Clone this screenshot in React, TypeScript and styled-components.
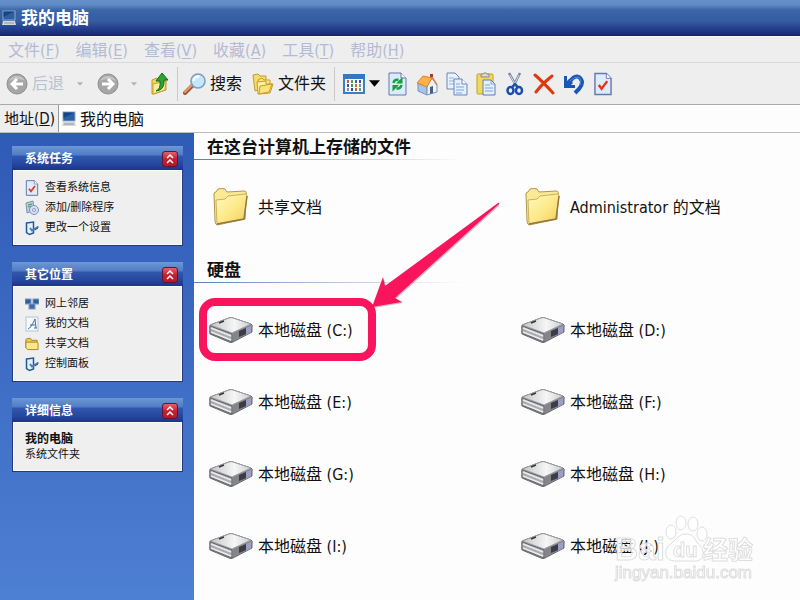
import React, { useState } from "react";
import styled, { createGlobalStyle, css } from "styled-components";

const GlobalStyle = createGlobalStyle`
  * { box-sizing: border-box; }
  body {
    margin: 0;
    color: #111;
    background: #fdfdfd;
    font-family: "DejaVu Sans Condensed", "Noto Sans CJK SC", sans-serif;
    font-size: 16px;
    line-height: 20px;
  }
  button, input { font: inherit; color: inherit; }
`;

/* ---------- window chrome ---------- */

const Window = styled.div`
  display: flex;
  flex-direction: column;
  min-height: 100vh;
`;

const TitleBar = styled.header`
  display: flex;
  align-items: center;
  gap: 5px;
  height: 36px;
  padding-left: 2px;
  color: #fff;
  background: linear-gradient(#6590c8 0, #5f8ac4 5px, #3b65a8 10px, #355da1 21px, #24418f 28px, #1d2c7c 34px, #191f66 100%);
`;

const Title = styled.h1`
  margin: 0;
  font-size: 17px;
  font-weight: 700;
  line-height: 24px;
`;

const MenuBar = styled.nav`
  display: flex;
  align-items: center;
  gap: 16px;
  height: 27px;
  padding: 2px 0 0 8px;
  background: #eeeeee;
  border-top: 1px solid #fafafa;
  border-bottom: 1px solid #d9d9de;
`;

const plainButton = css`
  display: flex;
  align-items: center;
  padding: 0;
  border: 0;
  background: none;
  white-space: nowrap;
`;

const MenuButton = styled.button`
  ${plainButton}
  color: #b3bbd3;
  u { text-underline-offset: 2px; }
`;

const ToolBar = styled.div`
  display: flex;
  align-items: center;
  height: 42px;
  padding-left: 6px;
  background: #eeeeee;
  border-bottom: 1px solid #a9a9a9;
`;

const ToolGroup = styled.div`
  display: flex;
  flex: none;
  gap: 10px;
  padding-right: 3px;
`;

const ToolButton = styled.button<{ $width?: number }>`
  ${plainButton}
  flex: none;
  gap: 4px;
  height: 30px;
  justify-content: ${p => (p.$width ? "center" : "flex-start")};
  width: ${p => (p.$width ? `${p.$width}px` : "auto")};
  &:disabled { color: #b9c2d0; }
`;

const Separator = styled.span`
  flex: none;
  width: 1px;
  height: 34px;
  margin: 0 5px;
  background: #c9c9cc;
`;

const AddressBar = styled.label`
  display: flex;
  align-items: stretch;
  height: 28px;
  background: #eeeeee;
  border-bottom: 1px solid #bcbcbc;
`;

const AddressLabel = styled.span`
  display: flex;
  align-items: center;
  width: 58px;
  padding-left: 4px;
  font-size: 15px;
  white-space: nowrap;
`;

const AddressField = styled.span`
  display: flex;
  flex: 1;
  align-items: center;
  gap: 4px;
  padding-left: 3px;
  background: #fdfdfd;
  border-left: 1px solid #9a9a9a;
`;

const AddressInput = styled.input`
  flex: 1;
  min-width: 0;
  padding: 2px 0 0;
  border: 0;
  outline: 0;
  background: none;
`;

const Body = styled.div`
  display: flex;
  flex: 1;
`;

/* ---------- side bar ---------- */

const SideBar = styled.aside`
  display: flex;
  flex: none;
  flex-direction: column;
  gap: 16px;
  width: 194px;
  padding: 13px 11px 16px 12px;
  background: linear-gradient(#2f5ab6, #4d7fd3);
`;

const PanelHeader = styled.div`
  display: flex;
  align-items: center;
  justify-content: space-between;
  height: 24px;
  padding: 1px 5px 0 13px;
  background: linear-gradient(#6d97d4 0, #4f7cc6 9px, #3158ab 10px, #2647a0 18px, #1f318e 100%);
`;

const PanelTitle = styled.h2`
  margin: 0;
  color: #fff;
  font-size: 12px;
  line-height: 16px;
`;

const Collapse = styled.button`
  ${plainButton}
  justify-content: center;
  width: 16px;
  height: 16px;
  border: 1px solid #5d1530;
  border-radius: 3px;
  background: linear-gradient(#e4606c, #c4212f 50%, #b8182a);
`;

const PanelBody = styled.div`
  padding: 8px 12px 7px;
  border: 1px solid #26397f;
  border-top: 0;
  box-shadow: inset 0 0 0 1px #fafafa;
  background: #efefef;
  font-size: 11px;
`;

const TaskLink = styled.a`
  display: flex;
  align-items: center;
  gap: 6px;
  height: 20px;
  color: #111;
  text-decoration: none;
  line-height: 16px;
`;

const Details = styled.p`
  margin: 2px 0;
  line-height: 15px;
  strong { display: block; font-size: 12px; }
`;

/* ---------- content ---------- */

const Content = styled.main`
  flex: 1;
  min-width: 0;
  background: #fdfdfd;
`;

const SectionTitle = styled.h2`
  height: 27px;
  margin: 0;
  padding: 3px 0 0 13px;
  font-size: 17px;
  line-height: 22px;
  background: linear-gradient(90deg, #5b7fae, #a9bcd6 120px, #fdfdfd 270px) left bottom / 100% 1px no-repeat;
`;

const TileGrid = styled.div`
  display: grid;
  grid-template-columns: repeat(auto-fill, 250px);
  grid-auto-rows: 72px;
  column-gap: 62px;
  padding: 11px 0 13px 15px;
`;

const TileCell = styled.div`
  position: relative;
  display: flex;
`;

const Tile = styled.button`
  ${plainButton}
  flex: 1;
  gap: 5px;
`;

const TileName = styled.span`
  padding-top: 2px;
`;

const TileIcon = styled.span`
  display: flex;
  flex: none;
  justify-content: center;
  width: 44px;
`;

const Highlight = styled.span`
  position: absolute;
  top: 4px;
  left: -10px;
  width: 177px;
  height: 63px;
  border: 8px solid #f9155d;
  border-radius: 16px;
  pointer-events: none;
`;

const ArrowSvg = styled.svg`
  position: absolute;
  top: -93px;
  left: 161px;
  z-index: 1;
  pointer-events: none;
`;

const WatermarkSvg = styled.svg`
  position: fixed;
  right: 40px;
  bottom: 14px;
  pointer-events: none;
`;

/* ---------- icons ---------- */

const ComputerIcon = () => (
  <svg width="14" height="16" viewBox="0 0 14 16">
    <rect x="1" y="1" width="12" height="9" fill="#2b5fa6" stroke="#8fa9c9" />
    <path d="M1.5 1.5h11L1.5 7z" fill="#17467f" />
    <path d="M1 11h12l1 4H0z" fill="#d5d6d8" />
    <path d="M2 13h10" stroke="#8e98a6" />
  </svg>
);

const RoundArrow = ({ forward = false }: { forward?: boolean }) => (
  <svg width="22" height="22" viewBox="0 0 22 22">
    <circle cx="11" cy="11" r="10" fill="#a6a6a6" stroke="#8f8f8f" />
    <path d="M3 8a9 9 0 0 1 16 0q-8-4-16 0z" fill="#c4c4c4" />
    <path
      d={forward ? "M5 11h11M11 6l5 5-5 5" : "M17 11H6M11 6l-5 5 5 5"}
      fill="none" stroke="#fff" strokeWidth="3"
    />
  </svg>
);

const Caret = ({ dark = false }: { dark?: boolean }) => (
  <svg width={dark ? 11 : 6} height={dark ? 7 : 4} viewBox="0 0 10 6">
    <path d="M0 0h10L5 6z" fill={dark ? "#000" : "#b4b4b8"} />
  </svg>
);

const UpFolderIcon = () => (
  <svg width="20" height="24" viewBox="0 0 20 24">
    <path d="M2 8l5-2 2 2h7v10L4 22H2z" fill="#f1d564" stroke="#c69a2b" />
    <path d="M3 12l13-3-1 9-12 4z" fill="#fbec9a" stroke="#c9a136" />
    <path d="M6 19q5-2 4-10H6l6-8 6 7h-4q1 10-8 11z" fill="#2da533" stroke="#0f6a1d" />
  </svg>
);

const SearchIcon = () => (
  <svg width="23" height="24" viewBox="0 0 23 24">
    <path d="M2 21l8-8" stroke="#9a5a35" strokeWidth="4" strokeLinecap="round" />
    <path d="M2 20l7-7" stroke="#e79a62" strokeWidth="2" strokeLinecap="round" />
    <circle cx="15" cy="9" r="7" fill="#c4e8fb" stroke="#7f9dbf" strokeWidth="1.6" />
    <path d="M10.5 9a5 5 0 0 1 6-4.5" fill="none" stroke="#fff" strokeWidth="2" />
  </svg>
);

const FoldersIcon = () => (
  <svg width="22" height="22" viewBox="0 0 22 22" stroke="#c79b2b" strokeLinejoin="round">
    <path d="M1 2l5-1 2 2h6v11L3 18z" fill="#f7db6a" />
    <path d="M6 7l4-2 2 2h6v10L8 20z" fill="#fbe68a" />
    <path d="M5 9l9-1v3h7l-3 9-12 1z" fill="#fdf1a6" />
    <path d="M8 13l12-2-3 8-10 2z" fill="#fbe27b" />
  </svg>
);

const dots = ["#b85c54", "#6d9c58", "#3d5fb0", "#46518f", "#3f9940", "#bf7c28", "#708fc4", "#35459b"];
const ViewsIcon = () => (
  <svg width="22" height="20" viewBox="0 0 22 20">
    <rect x="1" y="1" width="20" height="18" fill="#f6f8fa" stroke="#3c7ec0" strokeWidth="2" />
    <rect x="0" y="0" width="22" height="5" fill="#3577c4" />
    {[0, 1, 2].flatMap(r =>
      [0, 1, 2, 3].map(c => (
        <rect key={`${r}${c}`} x={4 + c * 4} y={6 + r * 4} width="2" height="3" fill={dots[(r * 3 + c) % 8]} />
      ))
    )}
  </svg>
);

const sheet = "M1 1h12l5 5v17H1z";
const RefreshIcon = () => (
  <svg width="19" height="24" viewBox="0 0 19 24">
    <path d={sheet} fill="#dcebfb" stroke="#6277b3" />
    <path d="M13 1v5h5" fill="#fff" stroke="#6277b3" />
    <path d="M5.500 11q1-4 5-3M13.500 13q-1 4-5 3.500" fill="none" stroke="#16a038" strokeWidth="2.500" />
    <path d="M14.500 5v6.500H8zM4.500 19.500V13H11z" fill="#16a038" />
  </svg>
);

const HomeIcon = () => (
  <svg width="22" height="24" viewBox="0 0 22 24">
    <path d="M14 2h3v7h-3z" fill="#b4352f" />
    <path d="M2 11l9 3v9l-9-4z" fill="#a8c4ea" stroke="#7691bd" />
    <path d="M11 14l5-8 5 7v7l-10 3z" fill="#eef4fc" stroke="#7b94bd" />
    <path d="M1 11l6-7 9 2-5 9z" fill="#ffb04a" stroke="#dc8232" />
    <path d="M16 5l5 8" stroke="#c98a4e" strokeWidth="1.5" />
    <path d="M14 15l3-1v7l-3 1z" fill="#4a5c86" />
  </svg>
);

const CopyIcon = () => (
  <svg width="22" height="24" viewBox="0 0 22 24" stroke="#6a86bd">
    <path d="M1 1h8l4 4v12H1z" fill="#e8f1fc" />
    <path d="M3 6h5M3 9h7M3 12h5" stroke="#8fb4e0" />
    <path d="M8 7h8l5 5v11H8z" fill="#e3effc" />
    <path d="M16 7v5h5" fill="#fff" />
    <path d="M10 12h4M10 15h8M10 18h8M10 21h6" stroke="#7fa9db" />
  </svg>
);

const PasteIcon = () => (
  <svg width="20" height="24" viewBox="0 0 20 24">
    <rect x="1" y="2" width="16" height="20" rx="1" fill="#f3d95a" stroke="#c3a02c" />
    <path d="M5 5V2h2q2-3 4 0h2v3z" fill="#d9d8d0" stroke="#8c8b80" />
    <path d="M7 8h8l4 4v11H7z" fill="#e6f0fc" stroke="#5f7bb4" />
    <path d="M15 8v4h4M9 13h5M9 16h8M9 19h8" fill="none" stroke="#7fa0d2" />
  </svg>
);

const CutIcon = () => (
  <svg width="18" height="24" viewBox="0 0 18 24">
    <path d="M3 1l8 14M14 1L7 15" stroke="#7485a0" strokeWidth="2.5" />
    <path d="M4 3l5 9M13 3l-4 8" stroke="#d5dce6" />
    <ellipse cx="4.5" cy="18.5" rx="3" ry="3.5" fill="none" stroke="#1c4cab" strokeWidth="2.5" />
    <ellipse cx="13" cy="18.5" rx="3" ry="3.5" fill="none" stroke="#1c4cab" strokeWidth="2.5" />
    <path d="M6 15l3-3 3 3" fill="none" stroke="#1c4cab" strokeWidth="2" />
  </svg>
);

const DeleteIcon = () => (
  <svg width="22" height="22" viewBox="0 0 22 22" strokeLinecap="round">
    <path d="M2 2q8 7 18 18M19 3Q9 11 3 19" fill="none" stroke="#dd3a12" strokeWidth="3" />
  </svg>
);

const UndoIcon = () => (
  <svg width="22" height="22" viewBox="0 0 22 22">
    <path d="M6 10Q11 2 16 4q6 5 0 12l-4 4" fill="none" stroke="#1a56b4" strokeWidth="4" />
    <path d="M1 3h3v5l2-2 4 4-2 2h4v3H1z" fill="#1a56b4" />
    <path d="M7 8q5-5 9-4 3 3 1 8" fill="none" stroke="#4a90de" />
  </svg>
);

const CheckSheetIcon = ({ small = false }: { small?: boolean }) => (
  <svg width={small ? 14 : 18} height={small ? 16 : 24} viewBox="0 0 19 24">
    <path d={sheet} fill="#dfeafa" stroke="#6479ad" strokeWidth="1.5" />
    <path d="M13 1v5h5" fill="#fff" stroke="#6479ad" />
    <path d="M5 13l3 4 6-8" fill="none" stroke="#e0371c" strokeWidth="2.5" />
  </svg>
);

const ProgramsIcon = () => (
  <svg width="14" height="16" viewBox="0 0 14 16">
    <path d="M1 3l7-2 1 9-7 3z" fill="#b5cfdc" stroke="#7596aa" />
    <circle cx="9" cy="10" r="4.5" fill="#d8dff2" stroke="#7e8fbd" />
    <circle cx="9" cy="10" r="1.5" fill="#fff" stroke="#8a93b5" />
    <path d="M3 5l4-1M3 7l3-1" stroke="#4f9070" />
  </svg>
);

const SettingsIcon = () => (
  <svg width="14" height="16" viewBox="0 0 14 16">
    <path d="M1.500 3l7-1v11l-4 1.500-3-2z" fill="#e4f0fc" stroke="#22599d" strokeWidth="1.500" />
    <path d="M5 8l2 2.500 6.500-4" fill="none" stroke="#4c7cb4" strokeWidth="2" />
    <path d="M10 10l3-2" stroke="#274b78" />
  </svg>
);

const NetworkIcon = () => (
  <svg width="14" height="16" viewBox="0 0 14 16" stroke="#7a9cc4">
    <rect x="0" y="3" width="6" height="5" fill="#315f9c" />
    <rect x="8" y="3" width="6" height="5" fill="#315f9c" />
    <rect x="4" y="8" width="6" height="5" fill="#3e6da9" />
  </svg>
);

const DocumentIcon = () => (
  <svg width="14" height="16" viewBox="0 0 14 16">
    <rect x="1" y="1" width="12" height="14" fill="#f4f9fd" stroke="#b0c6d8" />
    <path d="M3 13q3-1 7-10l1 9M5 9h5M9 12h3" fill="none" stroke="#3f6f9f" />
  </svg>
);

const SmallFolderIcon = () => (
  <svg width="14" height="14" viewBox="0 0 15 14" stroke="#a8821f">
    <path d="M1 2l2-1h3l1 2h6v9H2L1 11z" fill="#edce57" />
    <path d="M1 5h12l1 1v7H3l-2-2z" fill="#fbe88d" />
  </svg>
);

const FolderIcon = () => (
  <svg width="36" height="38" viewBox="0 0 36 38">
    <defs>
      <linearGradient id="folderFace" x1="0" y1="0" x2="1" y2="1">
        <stop offset="0" stopColor="#fff9bf" />
        <stop offset="0.5" stopColor="#fdea8c" />
        <stop offset="1" stopColor="#f5cf59" />
      </linearGradient>
    </defs>
    <path d="M1 6q0-2 2-2l2-3q4-1 7 0l2 3 18-1q2 1 1 4l-1 24L4 37q-2-1-2-4z" fill="#faea96" stroke="#b09550" />
    <path d="M3 12l9-1 3-3 17-2q2 0 2 2l-3 23-27 5z" fill="url(#folderFace)" stroke="#cdb05a" />
    <path d="M4 36l27-5 3-23" fill="none" stroke="#94793c" strokeWidth="1.5" />
  </svg>
);

const DriveIcon = () => (
  <svg width="44" height="28" viewBox="0 0 44 28" strokeLinejoin="round">
    <defs>
      <linearGradient id="driveTop" x1="0" y1="0" x2="1" y2="0">
        <stop offset="0" stopColor="#c4c4c6" />
        <stop offset="0.6" stopColor="#f6f6f6" />
        <stop offset="1" stopColor="#cfcfd3" />
      </linearGradient>
    </defs>
    <path d="M1 9L20 2q2-1 4 0l18 6q2 1 1 3v5L24 26q-2 1-4 0L1 18z" fill="#96979a" stroke="#66676b" />
    <path d="M1 9L20 2q2-1 4 0l18 6-19 9z" fill="url(#driveTop)" stroke="#9b9ca0" />
    <path d="M1 10l22 8v8L1 17z" fill="#a9aaae" stroke="#66676b" />
    <path d="M2 12l20 8M2 16l20 8" stroke="#ececee" strokeWidth="1.5" />
    <path d="M24 17l18-8v7l-18 9z" fill="#84858a" />
    <path d="M30 15l7-3v6l-7 3z" fill="#3a3c42" />
    <path d="M37 12l5-2v6l-5 3z" fill="#9c9ec4" />
    <path d="M10 7l5-2" stroke="#333" strokeWidth="1.5" />
  </svg>
);

const ChevronsIcon = () => (
  <svg width="10" height="12" viewBox="0 0 10 12">
    <path d="M2 5l3-3 3 3M2 10l3-3 3 3" fill="none" stroke="#fff" strokeWidth="1.5" />
  </svg>
);

const Arrow = () => (
  <ArrowSvg width="134" height="110" viewBox="0 0 134 110">
    <path d="M3 107L14 78l2 7L128 3q2 0 1 2L26 98l7 4z" fill="#8e3a50" opacity="0.35" />
    <path d="M2 106L13 76l2 9L128 2q2-1 1 1L25 97l7 4z" fill="#f9155d" />
  </ArrowSvg>
);

const Watermark = () => (
  <WatermarkSvg width="148" height="72" viewBox="0 0 148 72" fill="#fff" fillOpacity="0.75" stroke="#dedede" fontFamily='"Liberation Sans", "Noto Sans CJK SC", sans-serif'>
    <text x="3" y="46" fontSize="32" fontWeight="700">Bai</text>
    <ellipse cx="59" cy="18" rx="5" ry="7" />
    <ellipse cx="69" cy="9" rx="5" ry="7" />
    <ellipse cx="81" cy="10" rx="5" ry="7" />
    <ellipse cx="90" cy="20" rx="5" ry="7" />
    <path d="M75 20q6 0 9 7l6 7q4 11-5 13H62q-10-1-8-11 1-4 6-7l6-6q4-4 9-3z" />
    <text x="61" y="43" fontSize="20" fontWeight="700">du</text>
    <text x="91" y="45" fontSize="25" fontWeight="700">经验</text>
    <text x="3" y="64" fontSize="17">jingyan.baidu.com</text>
  </WatermarkSvg>
);

/* ---------- data ---------- */

const menus = [["文件", "F"], ["编辑", "E"], ["查看", "V"], ["收藏", "A"], ["工具", "T"], ["帮助", "H"]];

const panels = [
  {
    title: "系统任务",
    links: [
      { text: "查看系统信息", icon: <CheckSheetIcon small /> },
      { text: "添加/删除程序", icon: <ProgramsIcon /> },
      { text: "更改一个设置", icon: <SettingsIcon /> },
    ],
  },
  {
    title: "其它位置",
    links: [
      { text: "网上邻居", icon: <NetworkIcon /> },
      { text: "我的文档", icon: <DocumentIcon /> },
      { text: "共享文档", icon: <SmallFolderIcon /> },
      { text: "控制面板", icon: <SettingsIcon /> },
    ],
  },
];

const drives = ["C", "D", "E", "F", "G", "H", "I", "J"];

const Panel = ({ title, children }: { title: string; children: React.ReactNode }) => {
  const [open, setOpen] = useState(true);
  return (
    <section>
      <PanelHeader>
        <PanelTitle>{title}</PanelTitle>
        <Collapse aria-label={title} aria-expanded={open} onClick={() => setOpen(!open)}>
          <ChevronsIcon />
        </Collapse>
      </PanelHeader>
      {open && <PanelBody>{children}</PanelBody>}
    </section>
  );
};

export default function App() {
  const [address, setAddress] = useState("我的电脑");
  return (
    <Window>
      <GlobalStyle />
      <TitleBar>
        <ComputerIcon />
        <Title>我的电脑</Title>
      </TitleBar>
      <MenuBar>
        {menus.map(([name, key]) => (
          <MenuButton key={key}>{name}(<u>{key}</u>)</MenuButton>
        ))}
      </MenuBar>
      <ToolBar>
        <ToolButton disabled><RoundArrow />后退</ToolButton>
        <ToolButton disabled $width={32} aria-label="后退列表"><Caret /></ToolButton>
        <ToolButton disabled $width={24} aria-label="前进"><RoundArrow forward /></ToolButton>
        <ToolButton disabled $width={28} aria-label="前进列表"><Caret /></ToolButton>
        <ToolButton $width={24} aria-label="向上"><UpFolderIcon /></ToolButton>
        <Separator />
        <ToolGroup>
          <ToolButton><SearchIcon />搜索</ToolButton>
          <ToolButton><FoldersIcon />文件夹</ToolButton>
        </ToolGroup>
        <Separator />
        <ToolButton $width={42} aria-label="查看"><ViewsIcon /><Caret dark /></ToolButton>
        <ToolButton $width={30} aria-label="刷新"><RefreshIcon /></ToolButton>
        <ToolButton $width={30} aria-label="主页"><HomeIcon /></ToolButton>
        <ToolButton $width={29} aria-label="复制"><CopyIcon /></ToolButton>
        <ToolButton $width={29} aria-label="粘贴"><PasteIcon /></ToolButton>
        <ToolButton $width={29} aria-label="剪切"><CutIcon /></ToolButton>
        <ToolButton $width={30} aria-label="删除"><DeleteIcon /></ToolButton>
        <ToolButton $width={29} aria-label="撤销"><UndoIcon /></ToolButton>
        <ToolButton $width={30} aria-label="属性"><CheckSheetIcon /></ToolButton>
      </ToolBar>
      <AddressBar>
        <AddressLabel>地址(<u>D</u>)</AddressLabel>
        <AddressField>
          <ComputerIcon />
          <AddressInput value={address} onChange={e => setAddress(e.target.value)} />
        </AddressField>
      </AddressBar>
      <Body>
        <SideBar>
          {panels.map(panel => (
            <Panel key={panel.title} title={panel.title}>
              {panel.links.map(link => (
                <TaskLink key={link.text} href="#">{link.icon}{link.text}</TaskLink>
              ))}
            </Panel>
          ))}
          <Panel title="详细信息">
            <Details><strong>我的电脑</strong>系统文件夹</Details>
          </Panel>
        </SideBar>
        <Content>
          <SectionTitle>在这台计算机上存储的文件</SectionTitle>
          <TileGrid>
            {["共享文档", "Administrator 的文档"].map(name => (
              <TileCell key={name}>
                <Tile><TileIcon><FolderIcon /></TileIcon><TileName>{name}</TileName></Tile>
              </TileCell>
            ))}
          </TileGrid>
          <SectionTitle>硬盘</SectionTitle>
          <TileGrid>
            {drives.map(letter => (
              <TileCell key={letter}>
                <Tile><TileIcon><DriveIcon /></TileIcon><TileName>本地磁盘 ({letter}:)</TileName></Tile>
                {letter === "C" && <><Highlight /><Arrow /></>}
              </TileCell>
            ))}
          </TileGrid>
        </Content>
      </Body>
      <Watermark />
    </Window>
  );
}
